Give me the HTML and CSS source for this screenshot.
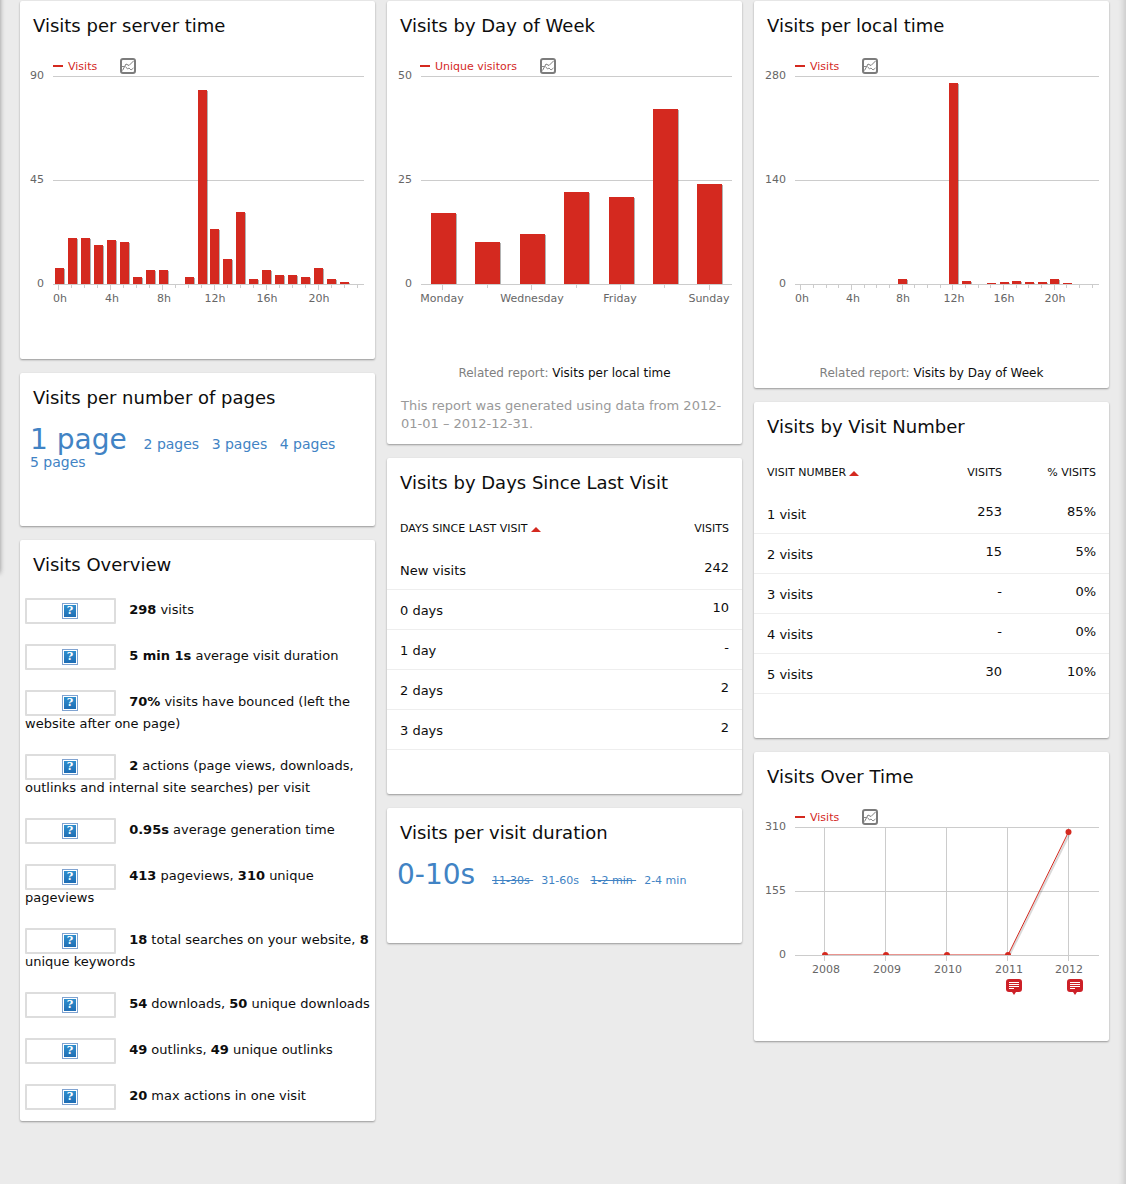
FILE: index.html
```html
<!DOCTYPE html>
<html lang="en">
<head>
<meta charset="utf-8">
<meta name="viewport" content="width=device-width, initial-scale=1">
<title>Dashboard</title>
<link rel="stylesheet" href="styles.css">
</head>
<body>
<svg class="sprite" aria-hidden="true">
  <symbol id="icon-series" viewBox="0 0 16 16">
    <rect x="1" y="1" width="14" height="14" rx="2" fill="#fff" stroke="#7c7c7c" stroke-width="2"/>
    <path d="M2.500 12.500L6 6l3 1.500 4.500-4.500" fill="none" stroke="#7c7c7c"/>
    <path d="M2 8.500h2.500M5.500 8.500l2 2.500 1.500-1 2 2 2.500-2" fill="none" stroke="#8a8a8a"/>
  </symbol>
  <symbol id="icon-note" viewBox="0 0 16 16">
    <path d="M3 0h10a3 3 0 0 1 3 3v7a3 3 0 0 1-3 3h-3l-2 3-2-3H3a3 3 0 0 1-3-3V3a3 3 0 0 1 3-3z" fill="#cd2027"/>
    <path d="M3 3.500h10M3 5.500h10M3 7.500h10M3 9.500h5" stroke="#fff"/>
  </symbol>
</svg>
<main class="dashboard">
  <div class="column">
    <section class="card card-chart">
      <h2>Visits per server time</h2>
      <div class="legend"><span class="series">Visits</span><button type="button" class="picker" aria-label="Choose metrics"><svg><use href="#icon-series"/></svg></button></div>
      <svg class="chart" viewBox="0 0 355 236" role="img" aria-label="Visits per server time">
        <path class="grid" d="M33 2.500H344M33 106.500H344M33 210.500H344"/>
        <path class="grid" d="M38.500 211v5M51.500 211v3M64.500 211v3M77.500 211v3M90.500 211v5M103.500 211v3M116.500 211v3M129.500 211v3M142.500 211v5M155.500 211v3M168.500 211v3M181.500 211v3M194.500 211v5M207.500 211v3M220.500 211v3M233.500 211v3M246.500 211v5M259.500 211v3M272.500 211v3M285.500 211v3M298.500 211v5M311.500 211v3M324.500 211v3M337.500 211v3"/>
        <g class="bars">
          <path d="M35 194h9v16h-9zM48 164h9v46h-9zM61 164h9v46h-9zM74 171h9v39h-9zM87 166h9v44h-9zM100 168h9v42h-9zM113 203h9v7h-9zM126 196h9v14h-9zM139 196h9v14h-9zM165 203h9v7h-9zM178 16h9v194h-9zM190 155h9v55h-9zM203 185h9v25h-9zM216 138h9v72h-9zM229 205h9v5h-9zM242 196h9v14h-9zM255 201h9v9h-9zM268 201h9v9h-9zM281 203h9v7h-9zM294 194h9v16h-9zM307 205h9v5h-9zM320 208h9v2h-9z"/>
        </g>
        <g class="y-labels"><text x="24" y="5">90</text><text x="24" y="109">45</text><text x="24" y="213">0</text></g>
        <g class="x-labels"><text x="40" y="228">0h</text><text x="92" y="228">4h</text><text x="144" y="228">8h</text><text x="195" y="228">12h</text><text x="247" y="228">16h</text><text x="299" y="228">20h</text></g>
      </svg>
    </section>

    <section class="card card-cloud card-cloud-pages">
      <h2>Visits per number of pages</h2>
      <ul class="cloud">
        <li class="cloud-large">1 page&nbsp;</li><li class="cloud-medium">2 pages&nbsp;</li><li class="cloud-medium">3 pages&nbsp;</li><li class="cloud-medium">4 pages&nbsp;</li><li class="cloud-medium">5 pages&nbsp;</li>
      </ul>
    </section>

    <section class="card card-overview">
      <h2>Visits Overview</h2>
      <ul class="overview">
        <li><span class="spark"><span class="missing">?</span></span> <strong>298</strong> visits</li>
        <li><span class="spark"><span class="missing">?</span></span> <strong>5 min 1s</strong> average visit duration</li>
        <li><span class="spark"><span class="missing">?</span></span> <strong>70%</strong> visits have bounced (left the website after one page)</li>
        <li><span class="spark"><span class="missing">?</span></span> <strong>2</strong> actions (page views, downloads, outlinks and internal site searches) per visit</li>
        <li><span class="spark"><span class="missing">?</span></span> <strong>0.95s</strong> average generation time</li>
        <li><span class="spark"><span class="missing">?</span></span> <strong>413</strong> pageviews, <strong>310</strong> unique pageviews</li>
        <li><span class="spark"><span class="missing">?</span></span> <strong>18</strong> total searches on your website, <strong>8</strong> unique keywords</li>
        <li><span class="spark"><span class="missing">?</span></span> <strong>54</strong> downloads, <strong>50</strong> unique downloads</li>
        <li><span class="spark"><span class="missing">?</span></span> <strong>49</strong> outlinks, <strong>49</strong> unique outlinks</li>
        <li><span class="spark"><span class="missing">?</span></span> <strong>20</strong> max actions in one visit</li>
      </ul>
    </section>
  </div>

  <div class="column">
    <section class="card" id="day-of-week">
      <h2>Visits by Day of Week</h2>
      <div class="legend"><span class="series">Unique visitors</span><button type="button" class="picker" aria-label="Choose metrics"><svg><use href="#icon-series"/></svg></button></div>
      <svg class="chart" viewBox="0 0 355 236" role="img" aria-label="Unique visitors by day of week">
        <path class="grid" d="M34 2.500H345M34 106.500H345M34 210.500H345"/>
        <path class="grid" d="M55.500 211v5M100.500 211v3M144.500 211v5M189.500 211v3M233.500 211v5M277.500 211v3M322.500 211v5"/>
        <g class="bars">
          <path d="M44 139h25v71h-25zM88 168h25v42h-25zM133 160h25v50h-25zM177 118h25v92h-25zM222 123h25v87h-25zM266 35h25v175h-25zM310 110h25v100h-25z"/>
        </g>
        <g class="y-labels"><text x="25" y="5">50</text><text x="25" y="109">25</text><text x="25" y="213">0</text></g>
        <g class="x-labels"><text x="55" y="228">Monday</text><text x="145" y="228">Wednesday</text><text x="233" y="228">Friday</text><text x="322" y="228">Sunday</text></g>
      </svg>
      <p class="related">Related report: <a href="#local-time">Visits per local time</a></p>
      <p class="generated">This report was generated using data from 2012-01-01 – 2012-12-31.</p>
    </section>

    <section class="card card-table">
      <h2>Visits by Days Since Last Visit</h2>
      <table>
        <thead><tr><th scope="col" aria-sort="ascending"><button type="button">Days since last visit<span class="sort-arrow"></span></button></th><th scope="col"><button type="button">Visits</button></th></tr></thead>
        <tbody>
          <tr><td>New visits</td><td>242</td></tr>
          <tr><td>0 days</td><td>10</td></tr>
          <tr><td>1 day</td><td>-</td></tr>
          <tr><td>2 days</td><td>2</td></tr>
          <tr><td>3 days</td><td>2</td></tr>
        </tbody>
      </table>
    </section>

    <section class="card card-cloud">
      <h2>Visits per visit duration</h2>
      <ul class="cloud">
        <li class="cloud-large">0-10s&nbsp;</li><li class="cloud-small"><s>11-30s&nbsp;</s></li><li class="cloud-small">31-60s&nbsp;</li><li class="cloud-small"><s>1-2 min&nbsp;</s></li><li class="cloud-small">2-4 min&nbsp;</li>
      </ul>
    </section>
  </div>

  <div class="column">
    <section class="card card-related" id="local-time">
      <h2>Visits per local time</h2>
      <div class="legend legend-wide"><span class="series">Visits</span><button type="button" class="picker" aria-label="Choose metrics"><svg><use href="#icon-series"/></svg></button></div>
      <svg class="chart" viewBox="0 0 355 236" role="img" aria-label="Visits per local time">
        <path class="grid" d="M41 2.500H345M41 106.500H345M41 210.500H345"/>
        <path class="grid" d="M46.500 211v5M59.500 211v3M72.500 211v3M84.500 211v3M97.500 211v5M110.500 211v3M122.500 211v3M135.500 211v3M148.500 211v5M160.500 211v3M173.500 211v3M186.500 211v3M198.500 211v5M211.500 211v3M224.500 211v3M236.500 211v3M249.500 211v5M262.500 211v3M274.500 211v3M287.500 211v3M300.500 211v5M312.500 211v3M325.500 211v3M338.500 211v3"/>
        <g class="bars">
          <path d="M144 205h9v5h-9zM195 9h9v201h-9zM208 207h9v3h-9zM233 209h9v1h-9zM246 208h9v2h-9zM258 207h9v3h-9zM271 208h9v2h-9zM284 208h9v2h-9zM296 205h9v5h-9zM309 209h9v1h-9z"/>
        </g>
        <g class="y-labels"><text x="32" y="5">280</text><text x="32" y="109">140</text><text x="32" y="213">0</text></g>
        <g class="x-labels"><text x="48" y="228">0h</text><text x="99" y="228">4h</text><text x="149" y="228">8h</text><text x="200" y="228">12h</text><text x="250" y="228">16h</text><text x="301" y="228">20h</text></g>
      </svg>
      <p class="related">Related report: <a href="#day-of-week">Visits by Day of Week</a></p>
    </section>

    <section class="card card-table">
      <h2>Visits by Visit Number</h2>
      <table>
        <thead><tr><th scope="col" aria-sort="ascending"><button type="button">Visit number<span class="sort-arrow"></span></button></th><th scope="col"><button type="button">Visits</button></th><th scope="col" class="percent"><button type="button">% Visits</button></th></tr></thead>
        <tbody>
          <tr><td>1 visit</td><td>253</td><td>85%</td></tr>
          <tr><td>2 visits</td><td>15</td><td>5%</td></tr>
          <tr><td>3 visits</td><td>-</td><td>0%</td></tr>
          <tr><td>4 visits</td><td>-</td><td>0%</td></tr>
          <tr><td>5 visits</td><td>30</td><td>10%</td></tr>
        </tbody>
      </table>
    </section>

    <section class="card card-evolution">
      <h2>Visits Over Time</h2>
      <div class="legend legend-wide"><span class="series">Visits</span><button type="button" class="picker" aria-label="Choose metrics"><svg><use href="#icon-series"/></svg></button></div>
      <svg class="chart" viewBox="0 0 355 170" role="img" aria-label="Visits over time">
        <defs><clipPath id="plot-area"><rect x="41" y="0" width="304" height="130"/></clipPath></defs>
        <path class="grid" d="M41 2.500H345M41 66.500H345M41 130.500H345M70.500 2v134M131.500 2v134M192.500 2v134M253.500 2v134M314.500 2v134"/>
        <g clip-path="url(#plot-area)">
          <path class="line-shadow" d="M255 131L316 8"/>
          <path class="line" d="M71 130H254L314.500 7"/>
          <g class="points"><circle cx="71" cy="130" r="3"/><circle cx="132" cy="130" r="3"/><circle cx="193" cy="130" r="3"/><circle cx="254" cy="130" r="3"/><circle cx="314.500" cy="7" r="3"/></g>
        </g>
        <g class="y-labels"><text x="32" y="5">310</text><text x="32" y="69">155</text><text x="32" y="133">0</text></g>
        <g class="x-labels"><text x="72" y="148">2008</text><text x="133" y="148">2009</text><text x="194" y="148">2010</text><text x="255" y="148">2011</text><text x="315" y="148">2012</text></g>
        <use href="#icon-note" x="252" y="154" width="16" height="16"/>
        <use href="#icon-note" x="313" y="154" width="16" height="16"/>
      </svg>
    </section>
  </div>
</main>
</body>
</html>
```

FILE: styles.css
```css
* { box-sizing: border-box; }

body {
  margin: 0;
  background: #ebebeb;
  color: #0d0d0d;
  font: 13px/18px "DejaVu Sans", Verdana, sans-serif;
}

h2, p, ul { margin: 0; padding: 0; font-weight: normal; }
ul { list-style: none; }
a { color: inherit; text-decoration: none; }
button {
  padding: 0;
  border: 0;
  background: none;
  color: inherit;
  font: inherit;
  text-transform: inherit;
  cursor: pointer;
}
.sprite { position: absolute; width: 0; height: 0; }

.dashboard {
  position: relative;
  display: grid;
  grid-template-columns: repeat(3, minmax(0, 1fr));
  align-items: start;
  gap: 12px;
  min-height: 100vh;
  padding: 1px 17px 20px 20px;
  overflow: hidden;
  box-shadow: inset -8px 0 6px -6px rgba(0, 0, 0, 0.16);
}

/* Shadow of the menu panel that sits left of the columns */
.dashboard::before {
  content: "";
  position: absolute;
  top: -10px;
  left: -10px;
  width: 10px;
  height: 582px;
  box-shadow: 0 1px 5px rgba(0, 0, 0, 0.4);
}

.column { display: flex; flex-direction: column; gap: 14px; }

.card {
  padding: 13px 0 11px;
  border-radius: 2px;
  background: #fff;
  box-shadow: 0 1px 2px rgba(0, 0, 0, 0.36);
}
.card h2 { padding: 0 13px; font-size: 18px; line-height: 24px; }
.card-chart { padding-bottom: 49px; }
.card-related { padding-bottom: 6px; }
.card-evolution { padding-bottom: 46px; }
.card-table { padding-bottom: 44px; }
.card-cloud { min-height: 135px; }
.card-cloud-pages { min-height: 153px; }

.legend {
  display: flex;
  align-items: center;
  gap: 23px;
  height: 16px;
  margin-top: 20px;
  padding-left: 33px;
  color: #d4291f;
  font-size: 11px;
  line-height: 17px;
}
.legend-wide { padding-left: 41px; }
.series { display: flex; align-items: center; gap: 5px; }
.series::before { content: ""; width: 10px; height: 2px; background: #d4291f; }
.picker, .picker svg { display: block; width: 16px; height: 16px; }

.chart { display: block; width: 100%; height: auto; overflow: visible; }
.chart text { font-size: 11px; fill: #666; }
.y-labels { text-anchor: end; }
.x-labels { text-anchor: middle; }
.grid { fill: none; stroke: #ccc; }
.bars {
  fill: #d4291f;
  filter: drop-shadow(1px 1px 0 rgba(0, 0, 0, 0.3));
  clip-path: inset(-1px -2px 0 -1px);
}
.line { fill: none; stroke: #d4291f; }
.line-shadow { fill: none; stroke: rgba(0, 0, 0, 0.15); stroke-width: 2; }
.points { fill: #d4291f; }

.related { margin-top: 54px; color: #808080; font-size: 12px; text-align: center; }
.related a { color: #0d0d0d; }
.generated { margin-top: 15px; padding: 0 14px; color: #999; }

.cloud {
  display: flex;
  flex-wrap: wrap;
  align-items: baseline;
  column-gap: 8px;
  margin-top: 16px;
  padding: 0 10px;
  color: #4183c4;
}
.cloud-large { font-size: 28px; line-height: 28px; }
.cloud-medium { font-size: 14px; line-height: 17px; }
.cloud-small { font-size: 11px; line-height: 17px; }

.overview { display: grid; gap: 21px; margin-top: 21px; padding: 0 5px 1px; }
.spark {
  display: inline-flex;
  align-items: center;
  justify-content: center;
  width: 91px;
  height: 26px;
  margin: 0 9px -1px 0;
  padding-right: 1px;
  border: 2px solid #ddd;
  border-radius: 1px;
  vertical-align: middle;
}
.missing {
  width: 16px;
  height: 16px;
  padding: 1px;
  border: 1px solid #7fa3d1;
  background: linear-gradient(#2e8fce, #1f6db4) content-box;
  color: #fff;
  font: bold 11px/12px "DejaVu Serif", serif;
  text-align: center;
}

table { width: 100%; border-collapse: separate; border-spacing: 0; }
th {
  padding: 25px 13px 12px;
  font-size: 11px;
  font-weight: normal;
  text-align: right;
  text-transform: uppercase;
}
th:first-child, td:first-child { text-align: left; }
.percent { width: 94px; }
.sort-arrow {
  display: inline-block;
  margin-left: 3px;
  border: 5px solid transparent;
  border-top: 0;
  border-bottom-color: #d4291f;
}
td {
  height: 40px;
  padding: 9px 13px 12px;
  border-bottom: 1px solid #eee;
  text-align: right;
  vertical-align: top;
}
td:first-child { padding: 12px 13px 9px; }
```
